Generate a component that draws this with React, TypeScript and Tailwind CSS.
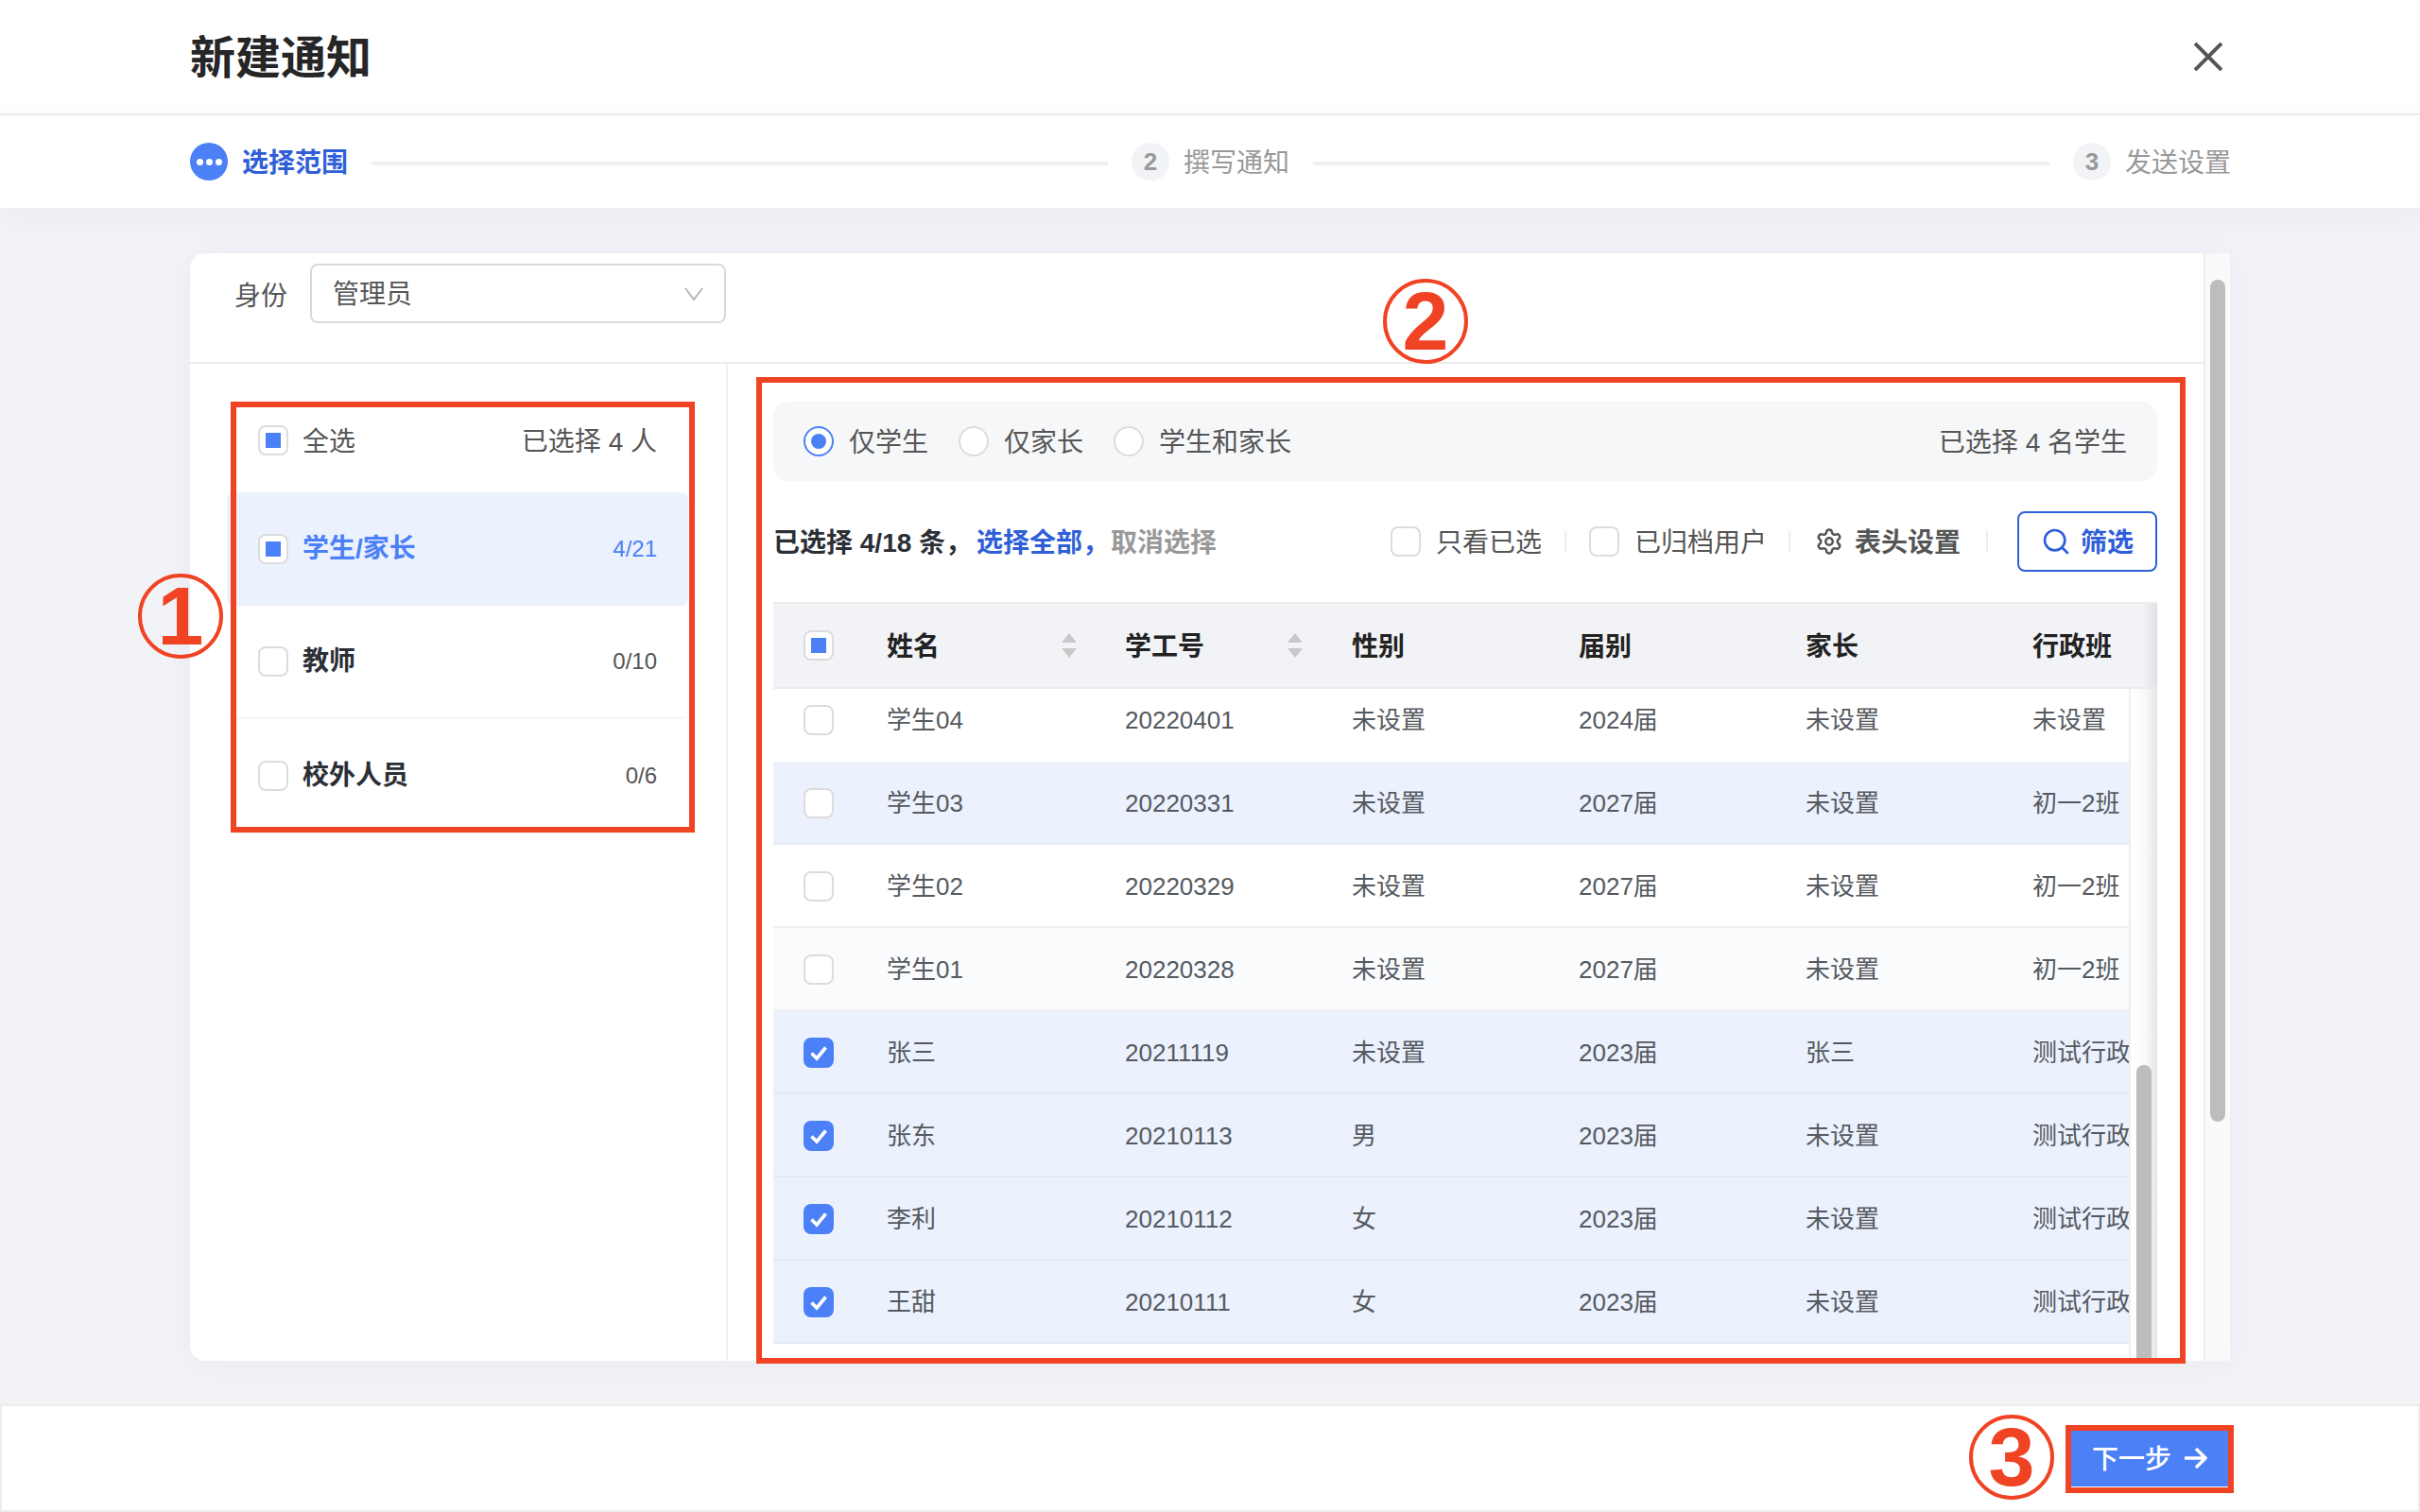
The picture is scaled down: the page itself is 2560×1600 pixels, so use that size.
import React from "react";
import { Settings, Search } from "lucide-react";

const font = "font-['Liberation_Sans','Noto_Sans_CJK_SC',sans-serif]";

function Check({ state = "off" }: { state?: "off" | "mixed" | "on" }) {
  if (state === "on") {
    return (
      <span className="flex h-[32px] w-[32px] shrink-0 items-center justify-center rounded-lg bg-[#4c80f7]">
        <svg width="22" height="22" viewBox="0 0 22 22" fill="none">
          <path d="M3.5 11.5 L9 17 L18.5 5.5" stroke="#fff" strokeWidth="3.6" />
        </svg>
      </span>
    );
  }
  return (
    <span className="flex h-[32px] w-[32px] shrink-0 items-center justify-center rounded-lg border-2 border-[#dcdcdc] bg-white">
      {state === "mixed" && <span className="h-[16px] w-[16px] bg-[#4c80f7]" />}
    </span>
  );
}

function Radio({ on, label, className = "" }: { on?: boolean; label: string; className?: string }) {
  return (
    <div className={`flex items-center ${className}`}>
      {on ? (
        <span className="flex h-[32px] w-[32px] items-center justify-center rounded-full border-2 border-[#4c80f7] bg-white">
          <span className="h-[16px] w-[16px] rounded-full bg-[#4c80f7]" />
        </span>
      ) : (
        <span className="h-[32px] w-[32px] rounded-full border-2 border-[#dcdcdc] bg-white" />
      )}
      <span className="ml-[16px] pt-[3px] text-[28px] text-[#555]">{label}</span>
    </div>
  );
}

function Step({ n, label, active }: { n?: string; label: string; active?: boolean }) {
  return (
    <div className="flex shrink-0 items-center">
      {active ? (
        <span className="flex h-[40px] w-[40px] items-center justify-center gap-[3px] rounded-full bg-[#4c80f7]">
          <span className="h-[7px] w-[7px] rounded-full bg-white" />
          <span className="h-[7px] w-[7px] rounded-full bg-white" />
          <span className="h-[7px] w-[7px] rounded-full bg-white" />
        </span>
      ) : (
        <span className="flex h-[40px] w-[40px] items-center justify-center rounded-full bg-[#f2f3f7] text-[26px] font-bold text-[#999]">
          {n}
        </span>
      )}
      <span className={`ml-[15px] pt-[3px] text-[28px] ${active ? "font-semibold text-[#2f5fd8]" : "text-[#999]"}`}>{label}</span>
    </div>
  );
}

function StepLine() {
  return <div className="mx-[25px] mt-[4px] h-[4px] flex-1 bg-[#f0f0f0]" />;
}

function Group({ state, label, count, active, last }: { state: "off" | "mixed"; label: string; count: string; active?: boolean; last?: boolean }) {
  return (
    <div
      className={`flex h-[120px] items-center rounded-lg px-[33px] ${active ? "bg-[#ebf1fd]" : ""} ${
        !active && !last ? "border-b-2 border-[#f5f5f5]" : ""
      }`}
    >
      <Check state={state} />
      <span className={`ml-[15px] flex-1 text-[28px] font-semibold ${active ? "text-[#4c80f7]" : "text-[#2b2f36]"}`}>{label}</span>
      <span className={`text-[24px] ${active ? "text-[#4c80f7]" : "text-[#555]"}`}>{count}</span>
    </div>
  );
}

function Caret() {
  return (
    <svg width="16" height="26" viewBox="0 0 16 26" className="shrink-0">
      <path d="M8 0 L16 10 L0 10 Z" fill="#c8c8c8" />
      <path d="M8 26 L16 16 L0 16 Z" fill="#c8c8c8" />
    </svg>
  );
}

const rows: { state: "off" | "on"; bg: string; cells: string[] }[] = [
  { state: "off", bg: "bg-white", cells: ["学生04", "20220401", "未设置", "2024届", "未设置", "未设置"] },
  { state: "off", bg: "bg-[#ebf1fd] border-[#e3e9f5]", cells: ["学生03", "20220331", "未设置", "2027届", "未设置", "初一2班"] },
  { state: "off", bg: "bg-white border-[#f0f0f0]", cells: ["学生02", "20220329", "未设置", "2027届", "未设置", "初一2班"] },
  { state: "off", bg: "bg-[#fafbfd] border-[#f0f0f0]", cells: ["学生01", "20220328", "未设置", "2027届", "未设置", "初一2班"] },
  { state: "on", bg: "bg-[#ebf1fd] border-[#e3e9f5]", cells: ["张三", "20211119", "未设置", "2023届", "张三", "测试行政班"] },
  { state: "on", bg: "bg-[#ebf1fd] border-[#e3e9f5]", cells: ["张东", "20210113", "男", "2023届", "未设置", "测试行政班"] },
  { state: "on", bg: "bg-[#ebf1fd] border-[#e3e9f5]", cells: ["李利", "20210112", "女", "2023届", "未设置", "测试行政班"] },
  { state: "on", bg: "bg-[#ebf1fd] border-[#e3e9f5]", cells: ["王甜", "20210111", "女", "2023届", "未设置", "测试行政班"] },
];

function Table() {
  return (
    <div className="flex min-h-0 flex-1 flex-col">
      <div className="flex h-[92px] shrink-0 border-y-2 border-[#ececec] bg-[#f2f3f7]">
        <div className="grid h-full w-[1434px] grid-cols-[120px_252px_240px_240px_240px_240px_102px] items-center text-[28px] font-semibold text-[#222]">
          <div className="pl-[32px]">
            <Check state="mixed" />
          </div>
          <div className="flex items-center justify-between pr-[51px]">
            <span className="pt-[3px]">姓名</span>
            <Caret />
          </div>
          <div className="flex items-center justify-between pr-[52px]">
            <span className="pt-[3px]">学工号</span>
            <Caret />
          </div>
          <div className="pt-[3px]">性别</div>
          <div className="pt-[3px]">届别</div>
          <div className="pt-[3px]">家长</div>
          <div className="whitespace-nowrap pt-[3px]">行政班</div>
        </div>
        <div className="w-[30px] bg-gradient-to-r from-[#f2f3f7] via-[#f2f3f7] to-[#dfe0e4]" />
      </div>
      <div className="flex min-h-0 flex-1 overflow-hidden">
        <div className="w-[1434px] shrink-0">
          {rows.map((r, i) => (
            <div
              key={i}
              className={`grid h-[88px] grid-cols-[120px_252px_240px_240px_240px_240px_102px] items-center border-b-2 text-[26px] text-[#555a60] ${r.bg} ${
                i === 0 ? "-mt-[11px] border-white" : ""
              }`}
            >
              <div className="flex pl-[32px] pt-[2px]">
                <Check state={r.state} />
              </div>
              {r.cells.map((c, j) => (
                <div key={j} className="overflow-hidden whitespace-nowrap pt-[3px]">
                  {c}
                </div>
              ))}
            </div>
          ))}
        </div>
        <div className="flex w-[30px] flex-col border-l-2 border-[#eeeeee] bg-gradient-to-r from-white via-[#fafafa] to-[#e6e6e6] pl-[6px] pt-[398px]">
          <div className="w-[16px] flex-1 rounded-t-full bg-[#bdbdbd]" />
        </div>
      </div>
    </div>
  );
}

function Annotation({ n, className }: { n: string; className: string }) {
  return (
    <div
      className={`absolute flex h-[90px] w-[90px] items-center justify-center rounded-full border-[4px] border-[#f04323] text-[88px] font-bold leading-none text-[#f04323] ${className}`}
    >
      {n}
    </div>
  );
}

export default function App() {
  return (
    <div className={`relative flex h-[1600px] w-[2560px] flex-col overflow-hidden bg-[#f2f3f7] ${font}`}>
      <header className="flex h-[122px] shrink-0 items-center justify-between border-b-2 border-[#ececec] bg-white pl-[201px] pr-[209px]">
        <h1 className="pt-[4px] text-[48px] font-semibold text-[#262626]">新建通知</h1>
        <svg width="30" height="30" viewBox="0 0 30 30" fill="none" stroke="#555" strokeWidth="4">
          <path d="M1 1 L29 29 M29 1 L1 29" />
        </svg>
      </header>

      <div className="z-10 flex h-[98px] shrink-0 items-center bg-white pl-[201px] pr-[200px] shadow-[0_10px_40px_rgba(30,40,90,0.04)]">
        <Step active label="选择范围" />
        <StepLine />
        <Step n="2" label="撰写通知" />
        <StepLine />
        <Step n="3" label="发送设置" />
      </div>

      <main className="min-h-0 flex-1 pl-[201px] pr-[201px] pt-[48px]">
        <div className="flex h-[1172px] overflow-hidden rounded-l-2xl bg-white shadow-[0_4px_40px_rgba(30,40,90,0.04)]">
          <div className="flex min-w-0 flex-1 flex-col">
            <div className="flex h-[117px] shrink-0 items-start border-b-2 border-[#ececec] pl-[47px] pt-[11px]">
              <span className="mt-[14px] text-[28px] text-[#555]">身份</span>
              <div className="ml-[24px] flex h-[63px] w-[440px] items-center justify-between rounded-lg border-2 border-[#d9d9d9] pl-[22px] pr-[22px] text-[28px] text-[#555]">
                <span className="pt-[3px]">管理员</span>
                <svg width="20" height="14" viewBox="0 0 20 14" fill="none" stroke="#b5b5b5" strokeWidth="2">
                  <path d="M1 1 L10 13 L19 1" />
                </svg>
              </div>
            </div>

            <div className="flex min-h-0 flex-1">
              <aside className="w-[569px] shrink-0 border-r-2 border-[#f0f0f0] pl-[39px] pr-[40px] pt-[36px]">
                <div className="flex h-[90px] items-center px-[33px]">
                  <Check state="mixed" />
                  <span className="ml-[15px] flex-1 pt-[3px] text-[28px] text-[#555]">全选</span>
                  <span className="pt-[3px] text-[28px] text-[#555]">已选择 4 人</span>
                </div>
                <div className="mt-[10px]">
                  <Group active state="mixed" label="学生/家长" count="4/21" />
                  <Group state="off" label="教师" count="0/10" />
                  <Group last state="off" label="校外人员" count="0/6" />
                </div>
              </aside>

              <section className="flex min-w-0 flex-1 flex-col pl-[48px] pr-[49px] pt-[40px]">
                <div className="flex h-[84px] shrink-0 items-center justify-between rounded-2xl bg-[#f6f7f9] pl-[32px] pr-[32px]">
                  <div className="flex items-center">
                    <Radio on label="仅学生" />
                    <Radio label="仅家长" className="ml-[32px]" />
                    <Radio label="学生和家长" className="ml-[32px]" />
                  </div>
                  <span className="pt-[3px] text-[28px] text-[#555]">已选择 4 名学生</span>
                </div>

                <div className="flex h-[128px] shrink-0 items-center">
                  <div className="flex-1 whitespace-nowrap pt-[3px] text-[28px] font-semibold">
                    <span className="text-[#2b2f36]">已选择 4/18 条，</span>
                    <span className="ml-[5px] text-[#2f5fd8]">选择全部，</span>
                    <span className="ml-[2px] text-[#999]">取消选择</span>
                  </div>
                  <Check />
                  <span className="ml-[16px] pt-[3px] text-[28px] text-[#555]">只看已选</span>
                  <span className="mx-[24px] h-[24px] w-[2px] bg-[#eeeeee]" />
                  <Check />
                  <span className="ml-[16px] pt-[3px] text-[28px] text-[#555]">已归档用户</span>
                  <span className="ml-[23px] mr-[26px] h-[24px] w-[2px] bg-[#eeeeee]" />
                  <Settings size={30} strokeWidth={2} className="text-[#555]" />
                  <span className="ml-[12px] pt-[3px] text-[28px] font-semibold text-[#555]">表头设置</span>
                  <span className="mx-[27px] h-[24px] w-[2px] bg-[#eeeeee]" />
                  <div className="ml-[4px] flex h-[64px] w-[148px] items-center justify-center rounded-lg border-2 border-[#2f5fd8] text-[28px] font-semibold text-[#2f5fd8]">
                    <Search size={32} strokeWidth={2} />
                    <span className="ml-[10px] pt-[3px]">筛选</span>
                  </div>
                </div>

                <Table />
              </section>
            </div>
          </div>

          <div className="w-[28px] shrink-0 border-l-2 border-[#ececec] bg-[#fafafa] pl-[5px] pt-[28px]">
            <div className="h-[891px] w-[16px] rounded-full bg-[#bdbdbd]" />
          </div>
        </div>
      </main>

      <footer className="flex h-[114px] shrink-0 items-center justify-end border-2 border-[#ececec] bg-white pr-[201px]">
        <div className="flex h-[60px] w-[166px] items-center bg-[#4c80f7] pl-[22px] text-[28px] font-medium text-white">
          <span className="pt-[3px]">下一步</span>
          <svg className="ml-[14px]" width="24" height="24" viewBox="0 0 24 24" fill="none" stroke="#fff" strokeWidth="3.4">
            <path d="M0 12 L22 12 M12 2 L22 12 L12 22" />
          </svg>
        </div>
      </footer>

      <div className="pointer-events-none absolute left-[244px] top-[425px] h-[456px] w-[491px] border-[6px] border-[#f04323]" />
      <div className="pointer-events-none absolute left-[800px] top-[399px] h-[1044px] w-[1512px] border-[6px] border-[#f04323]" />
      <div className="pointer-events-none absolute left-[2185px] top-[1508px] h-[72px] w-[178px] border-[6px] border-[#f04323]" />
      <Annotation n="1" className="left-[146px] top-[607px] bg-transparent" />
      <Annotation n="2" className="left-[1463px] top-[295px] bg-transparent" />
      <Annotation n="3" className="left-[2083px] top-[1497px] bg-transparent" />
    </div>
  );
}
